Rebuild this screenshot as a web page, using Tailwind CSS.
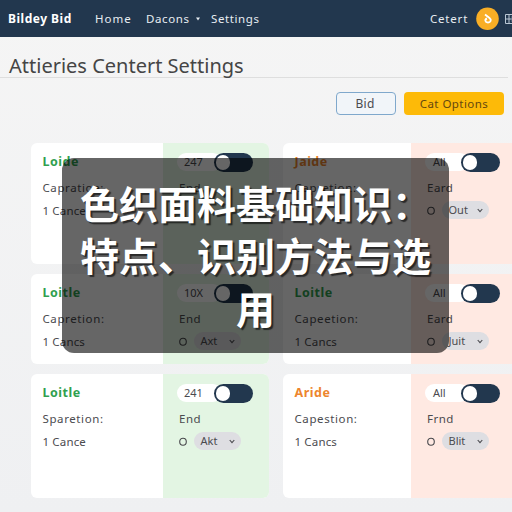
<!DOCTYPE html>
<html lang="zh">
<head>
<meta charset="utf-8">
<title>Attieries Centert Settings</title>
<script src="https://cdn.jsdelivr.net/npm/@tailwindcss/browser@4"></script>
</head>
<body class="relative w-[512px] h-[512px] overflow-hidden bg-linear-to-b from-[#f5f5f5] to-[#eff0f2] font-['Noto_Sans',sans-serif] text-[11.5px] text-[#4b4b4f]">
<header class="flex h-[37px] items-center bg-[#22374e] pl-2 text-[11.5px] text-[#e8edf2] whitespace-nowrap [&>*]:shrink-0">
  <b class="w-[87px] text-[12px] tracking-[0.5px] text-white">Bildey Bid</b>
  <span class="w-[51px] tracking-[1px]">Home</span>
  <span class="w-[50px] tracking-[0.6px]">Dacons</span>
  <svg class="mr-[11px] h-1 w-1" viewBox="0 0 4 4"><path d="M0 .5h4L2 3.5z" fill="#e8edf2"/></svg>
  <span class="w-[219px] tracking-[0.6px]">Settings</span>
  <span class="w-[46px] tracking-[0.8px]">Cetert</span>
  <svg class="h-[23px] w-[23px]" viewBox="0 0 23 23"><circle cx="11.5" cy="11.7" r="11.3" fill="#f9ae25"/><path d="M9 7.5l4.5 3.5c2.5 2 1 4.5-1.5 4.5-3 0-3.5-3-1-4" fill="none" stroke="#fff" stroke-width="1.9"/></svg>
  <svg class="ml-[6px] h-[10px] w-[9px]" viewBox="0 0 9 10" fill="none" stroke="#b9c7d4"><path d="M9 .5H.5v9H9M.5 5H9M4 0v10M6.5 3h3M6.5 7h3"/></svg>
</header>
<div class="mr-1 h-[41px] border-b border-[#dedede] pt-[14px] pl-[9px]">
  <h1 class="text-[20px] leading-[29px] whitespace-nowrap text-[#454545]">Attieries Centert Settings</h1>
</div>
<div class="flex h-[65px] justify-end gap-[8px] pt-[14px] pr-2 text-[12px]">
  <div class="flex h-[23px] w-[60px] items-center justify-center rounded-[4px] border border-[#7fa8cc] bg-[#f1f5f9] pr-[2px] tracking-[0.3px]">Bid</div>
  <div class="flex h-[23px] w-[100px] items-center justify-center rounded-[4px] bg-[#fdba08] text-[11.5px] tracking-[0.45px] text-[#644710]">Cat Options</div>
</div>
<main id="cards" class="grid w-[520px] grid-cols-[238px_237px] grid-rows-[121px_90px_124px] gap-x-[14px] gap-y-[10px] pl-[31px]"></main>
<div class="absolute top-[158px] left-[62px] flex h-[195px] w-[387px] items-center justify-center rounded-[12px] bg-black/60 text-center font-['Noto_Sans_CJK_SC',sans-serif] text-[39px] leading-[52.5px] font-bold text-white [text-shadow:2px_2px_1px_rgba(0,0,0,.6)]">
  <p class="relative -top-px whitespace-nowrap">色织面料基础知识：<br>特点、识别方法与选<br>用</p>
</div>
<script>
const rows = [
  ['Loide', 'Capratioe:', '1 Cance', '247', 'End', '', 0, 0],
  ['Jaide', 'Capretion:', '', 'All', 'Eard', 'Out', 1, 1],
  ['Loitle', 'Capretion:', '1 Cancs', '10X', 'End', 'Axt', 0, 0],
  ['Loitle', 'Capeetion:', '1 Cancs', 'All', 'Eard', 'Juit', 1, 0],
  ['Loitle', 'Sparetion:', '1 Cance', '241', 'End', 'Akt', 0, 0],
  ['Aride', 'Capestion:', '1 Cancs', 'All', 'Frnd', 'Blit', 1, 1]
];
document.getElementById('cards').innerHTML = rows.map(([title, label, count, badge, end, option, right, orange]) => `
<section class="flex overflow-hidden rounded-[6px] bg-white whitespace-nowrap">
  <div class="${right ? 'w-[128px]' : 'w-[132px]'} shrink-0 pt-[9px] pl-[11.5px]">
    <h2 class="h-[26px] text-[12.5px] leading-[20px] font-bold tracking-[0.5px] ${orange ? 'text-[#ed852d]' : 'text-[#30a04f]'}">${title}</h2>
    <p class="h-[23px] leading-[20px] tracking-[0.6px]">${label}</p>
    <p class="leading-[20px] tracking-[0.15px]">${count}</p>
  </div>
  <div class="${right ? 'bg-[#ffe9e2]' : 'bg-[#e3f5e3]'} flex-1 pt-[10px] pl-[14px]">
    <div class="flex h-[25px] items-start">
      <span class="h-[18px] ${right ? 'w-[44px] pl-[8px]' : 'w-[45px] pl-[7px]'} -mr-[8px] rounded-full bg-white text-[11px] leading-[18px]">${badge}</span>
      <span class="flex h-[18.5px] w-[39px] items-center rounded-full bg-[#22374e] pl-[1.5px]"><i class="h-[14.5px] w-[14.5px] rounded-full bg-white"></i></span>
    </div>
    <p class="h-[22px] pl-[2px] leading-[20px] tracking-[0.5px]">${end}</p>
    <div class="flex h-[20px] items-center pl-[1.5px]">
      ${option ? `<svg class="mr-[7px] h-[9px] w-[8px]" viewBox="0 0 8 9"><ellipse cx="4" cy="4.7" rx="3.3" ry="3.5" fill="none" stroke="#48484c" stroke-width="1.1"/></svg>
      <span class="flex h-[18px] w-[47px] items-center rounded-full bg-[#dedee2] pl-[7px] text-[11px]"><span class="w-[28px]">${option}</span><svg class="h-[5px] w-[6px]" viewBox="0 0 6 5"><path d="M.7 1L3 3.6 5.3 1" fill="none" stroke="#4b4b50" stroke-width="1.1"/></svg></span>` : ''}
    </div>
  </div>
</section>`).join('');
</script>
</body>
</html>
